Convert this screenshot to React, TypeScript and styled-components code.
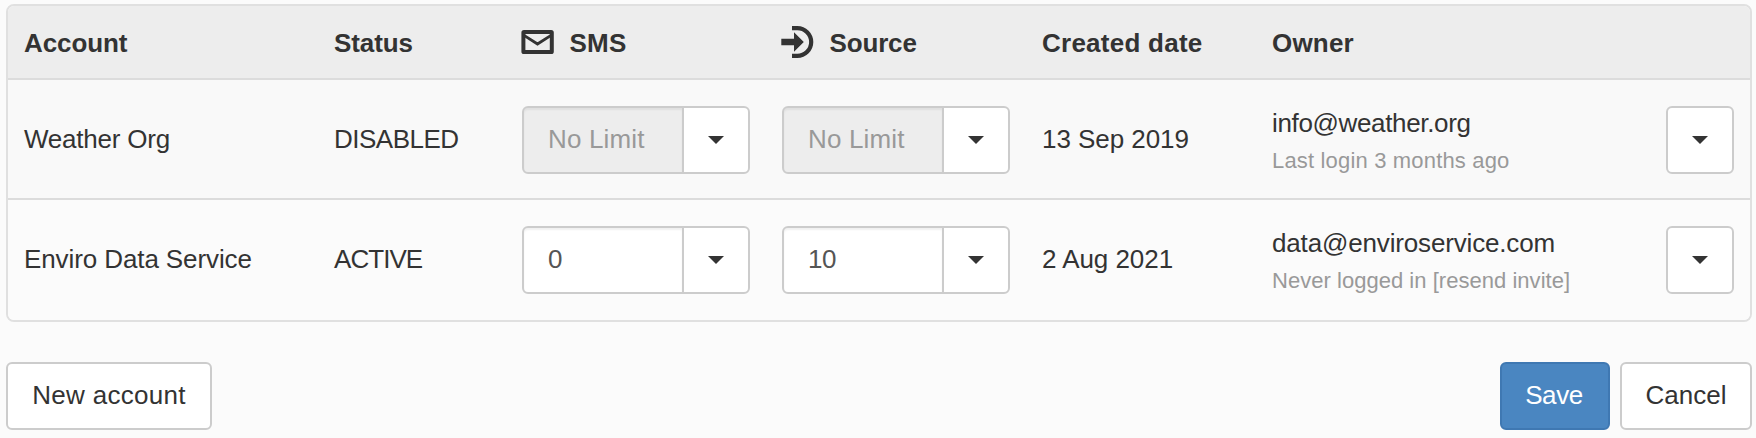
import React from "react";
import styled, { createGlobalStyle, css } from "styled-components";

const GlobalStyle = createGlobalStyle`
  *, *::before, *::after { box-sizing: border-box; }
  body {
    margin: 0;
    background: #fbfbfb;
    color: #333;
    font-family: "Liberation Sans", Arial, sans-serif;
    font-size: 26px;
    line-height: 34px;
  }
`;

const Page = styled.main`
  padding: 4px 4px 8px 6px;
`;

const Panel = styled.section`
  border: 2px solid #e0e0e0;
  border-radius: 8px;
  overflow: hidden;
`;

const rowGrid = css`
  display: grid;
  grid-template-columns: 310px 188px 260px 260px 230px 1fr 100px;
  align-items: center;
`;

const HeaderRow = styled.div`
  ${rowGrid}
  height: 74px;
  padding-top: 1px;
  background: #ededed;
  border-bottom: 2px solid #dcdcdc;
  font-weight: bold;
`;

const Row = styled.div<{ $striped?: boolean }>`
  ${rowGrid}
  height: 118px;
  padding-top: 2px;
  background: ${(p) => (p.$striped ? "#f9f9f9" : "#fbfbfb")};
  & + & {
    border-top: 2px solid #dcdcdc;
    height: 122px;
    padding-top: 0;
  }
`;

const Cell = styled.div`
  padding: 0 16px;
  white-space: nowrap;
`;

const HeaderCell = styled(Cell)`
  display: flex;
  align-items: center;
`;

const Text = styled.span<{ $track?: number }>`
  display: block;
  letter-spacing: ${(p) => p.$track ?? 0}px;
  margin-top: -2px;
`;

const HeaderText = styled(Text)`
  margin-top: 0;
`;

const Note = styled(Text)`
  margin-top: 5px;
  color: #999;
  font-size: 22px;
  line-height: 32px;
`;

const Owner = styled.div`
  padding-top: 4px;
`;

const HeaderIcon = styled.svg`
  display: block;
  width: 33px;
  height: 32px;
  margin: -1px 15.5px 0 -1px;
  fill: none;
  stroke: #333;
`;

const InputGroup = styled.div`
  display: flex;
  width: 228px;
  height: 68px;
`;

const Field = styled.div<{ $disabled?: boolean }>`
  display: flex;
  align-items: center;
  width: 162px;
  padding-left: 24px;
  border: 2px solid #ccc;
  border-radius: 6px 0 0 6px;
  background: ${(p) => (p.$disabled ? "#ededed" : "#fff")};
  color: ${(p) => (p.$disabled ? "#999" : "#555")};
  box-shadow: inset 0 2px 2px rgba(0, 0, 0, 0.06);
`;

const CaretButton = styled.button<{ $attached?: boolean }>`
  display: flex;
  align-items: center;
  justify-content: center;
  width: 68px;
  height: 68px;
  padding: 0;
  border: 2px solid #ccc;
  border-radius: ${(p) => (p.$attached ? "0 6px 6px 0" : "6px")};
  margin-left: ${(p) => (p.$attached ? "-2px" : "0")};
  background: #fff;

  &::after {
    content: "";
    border-top: 8px solid #333;
    border-left: 8px solid transparent;
    border-right: 8px solid transparent;
  }
`;

const Actions = styled.footer`
  display: flex;
  gap: 10px;
  margin-top: 40px;
`;

const Button = styled.button<{ $primary?: boolean; $width: number }>`
  width: ${(p) => p.$width}px;
  height: 68px;
  padding: 0 ${(p) => (p.$primary ? "2px" : "0")} 0 0;
  border: 2px solid ${(p) => (p.$primary ? "#3f78b2" : "#ccc")};
  border-radius: 6px;
  background: ${(p) => (p.$primary ? "#4a86c1" : "#fff")};
  color: ${(p) => (p.$primary ? "#fff" : "#333")};
  font: inherit;
`;

const Spacer = styled.div`
  flex: 1;
`;

const MailIcon = () => (
  <HeaderIcon viewBox="0 0 33 32" aria-hidden="true">
    <rect x="2.4" y="6" width="28.4" height="20" rx="0.6" strokeWidth="4" />
    <path d="M3 9.4 L16.5 18 L30 9.4" strokeWidth="2.9" />
  </HeaderIcon>
);

const SourceIcon = () => (
  <HeaderIcon viewBox="0 0 33 32" aria-hidden="true">
    <path d="M11 2.1 H16.3 A13.9 13.9 0 0 1 16.3 29.9 H11" strokeWidth="4.2" />
    <path d="M0.3 12.8 H13 V6.2 L22.8 16 L13 25.8 V19.2 H0.3 Z" fill="#333" stroke="none" />
  </HeaderIcon>
);

interface LimitProps {
  value: string;
  track: number;
  disabled?: boolean;
}

const LimitPicker = ({ value, track, disabled }: LimitProps) => (
  <InputGroup>
    <Field $disabled={disabled}>
      <Text $track={track}>{value}</Text>
    </Field>
    <CaretButton $attached aria-label="Choose limit" />
  </InputGroup>
);

export default function App() {
  return (
    <Page>
      <GlobalStyle />
      <Panel>
        <HeaderRow>
          <HeaderCell><HeaderText $track={-0.1}>Account</HeaderText></HeaderCell>
          <HeaderCell><HeaderText $track={-0.1}>Status</HeaderText></HeaderCell>
          <HeaderCell><MailIcon /><HeaderText $track={0.2}>SMS</HeaderText></HeaderCell>
          <HeaderCell><SourceIcon /><HeaderText $track={-0.15}>Source</HeaderText></HeaderCell>
          <HeaderCell><HeaderText $track={0.25}>Created date</HeaderText></HeaderCell>
          <HeaderCell><HeaderText $track={0.2}>Owner</HeaderText></HeaderCell>
          <HeaderCell />
        </HeaderRow>
        <Row $striped>
          <Cell><Text $track={-0.22}>Weather Org</Text></Cell>
          <Cell><Text $track={-0.5}>DISABLED</Text></Cell>
          <Cell><LimitPicker value="No Limit" track={0.15} disabled /></Cell>
          <Cell><LimitPicker value="No Limit" track={0.15} disabled /></Cell>
          <Cell><Text $track={-0.05}>13 Sep 2019</Text></Cell>
          <Cell>
            <Owner>
              <Text $track={-0.35}>info@weather.org</Text>
              <Note $track={0.17}>Last login 3 months ago</Note>
            </Owner>
          </Cell>
          <Cell><CaretButton aria-label="Account actions" /></Cell>
        </Row>
        <Row>
          <Cell><Text $track={-0.1}>Enviro Data Service</Text></Cell>
          <Cell><Text $track={-0.95}>ACTIVE</Text></Cell>
          <Cell><LimitPicker value="0" track={0} /></Cell>
          <Cell><LimitPicker value="10" track={-0.4} /></Cell>
          <Cell><Text $track={-0.05}>2 Aug 2021</Text></Cell>
          <Cell>
            <Owner>
              <Text $track={-0.16}>data@enviroservice.com</Text>
              <Note $track={0.03}>Never logged in [resend invite]</Note>
            </Owner>
          </Cell>
          <Cell><CaretButton aria-label="Account actions" /></Cell>
        </Row>
      </Panel>
      <Actions>
        <Button $width={206}><Text $track={0.29}>New account</Text></Button>
        <Spacer />
        <Button $primary $width={110}><Text $track={-0.4}>Save</Text></Button>
        <Button $width={132}><Text>Cancel</Text></Button>
      </Actions>
    </Page>
  );
}
